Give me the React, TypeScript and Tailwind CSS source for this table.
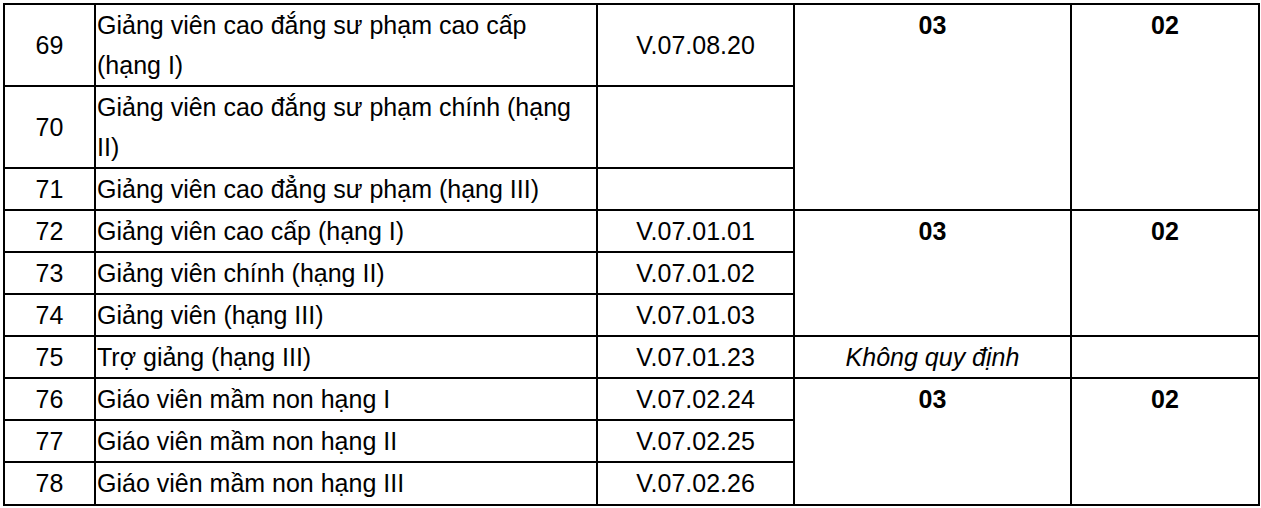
const cell = "border-2 border-black p-0 align-middle";

type Row = {
  no: string;
  name: string;
  code?: string;
  group?: "start" | "none" | "note";
  span?: number;
};

const rows: Row[] = [
  { no: "69", name: "Giảng viên cao đắng sư phạm cao cấp (hạng I)", code: "V.07.08.20", group: "start", span: 3 },
  { no: "70", name: "Giảng viên cao đắng sư phạm chính (hạng II)" },
  { no: "71", name: "Giảng viên cao đẳng sư phạm (hạng III)" },
  { no: "72", name: "Giảng viên cao cấp (hạng I)", code: "V.07.01.01", group: "start", span: 3 },
  { no: "73", name: "Giảng viên chính (hạng II)", code: "V.07.01.02" },
  { no: "74", name: "Giảng viên (hạng III)", code: "V.07.01.03" },
  { no: "75", name: "Trợ giảng (hạng III)", code: "V.07.01.23", group: "note" },
  { no: "76", name: "Giáo viên mầm non hạng I", code: "V.07.02.24", group: "start", span: 3 },
  { no: "77", name: "Giáo viên mầm non hạng II", code: "V.07.02.25" },
  { no: "78", name: "Giáo viên mầm non hạng III", code: "V.07.02.26" },
];

export default function App() {
  return (
    <div className="min-h-screen bg-white pl-[3px] pt-[3px] font-['Liberation_Sans',Arial,sans-serif] text-[25px] leading-[40px] text-black">
      <table className="w-[1257px] table-fixed border-collapse">
        <colgroup>
          <col className="w-[91px]" />
          <col className="w-[502px]" />
          <col className="w-[197px]" />
          <col className="w-[277px]" />
          <col className="w-[188px]" />
        </colgroup>
        <tbody>
          {rows.map((r, i) => {
            const last = i === rows.length - 1 ? "pb-px" : "";
            return (
              <tr key={r.no}>
                <td className={`${cell} ${last} text-center`}>{r.no}</td>
                <td className={`${cell} ${last} pl-px pr-[8px] text-left`}>{r.name}</td>
                <td className={`${cell} ${last} text-center`}>{r.code ?? ""}</td>
                {r.group === "start" && (
                  <>
                    <td rowSpan={r.span} className="border-2 border-black p-0 text-center align-top font-bold">
                      03
                    </td>
                    <td rowSpan={r.span} className="border-2 border-black p-0 text-center align-top font-bold">
                      02
                    </td>
                  </>
                )}
                {r.group === "note" && (
                  <>
                    <td className={`${cell} text-center italic`}>Không quy định</td>
                    <td className={cell}></td>
                  </>
                )}
              </tr>
            );
          })}
        </tbody>
      </table>
    </div>
  );
}
